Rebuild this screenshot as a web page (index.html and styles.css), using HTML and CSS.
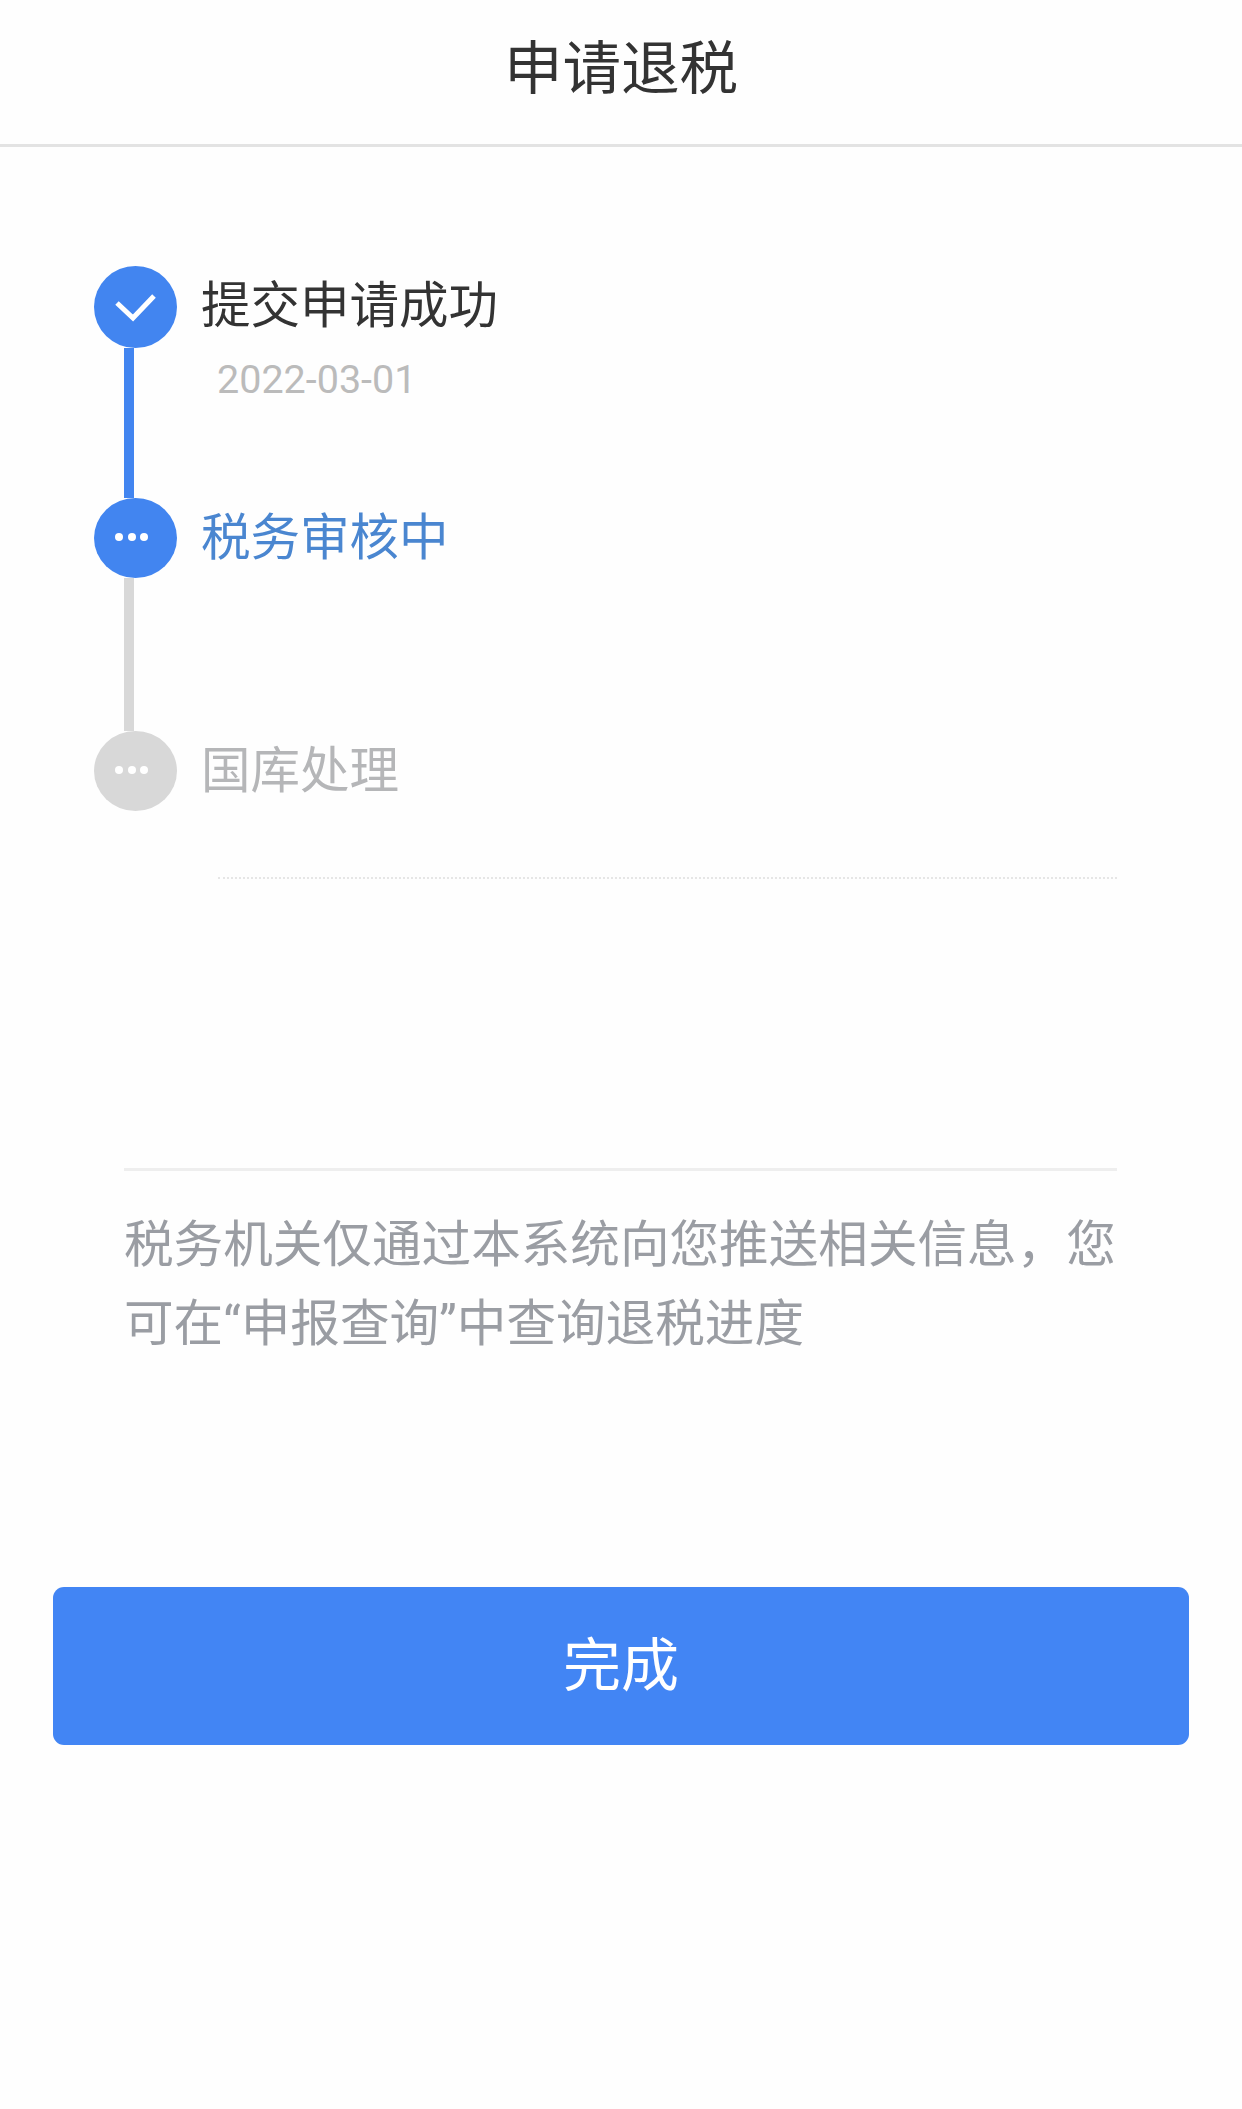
FILE: index.html
```html
<!DOCTYPE html>
<html lang="zh-CN">
<head>
  <meta charset="UTF-8"/>
  <meta name="viewport" content="width=device-width, initial-scale=1.0"/>
  <title>申请退税</title>
  <link rel="stylesheet" href="styles.css">
</head>
<body>
<div class="header">申请退税</div>

<div class="steps">
  <div class="step step_done">
    <div class="marker">
      <svg class="dot" viewBox="0 0 83 82">
        <path d="M23 37 L39 52 L60 30" fill="none" stroke="#fff" stroke-width="5"/>
      </svg>
      <div class="bar"></div>
    </div>
    <div class="info">
      <div class="name">提交申请成功</div>
      <div class="date">2022-03-01</div>
    </div>
  </div>

  <div class="step step_active">
    <div class="marker">
      <svg class="dot" viewBox="0 0 83 80">
        <circle cx="25" cy="39" r="4" fill="#fff"/>
        <circle cx="38" cy="39" r="4" fill="#fff"/>
        <circle cx="50" cy="39" r="4" fill="#fff"/>
      </svg>
      <div class="bar"></div>
    </div>
    <div class="info">
      <div class="name">税务审核中</div>
    </div>
  </div>

  <div class="step step_wait">
    <div class="marker">
      <svg class="dot" viewBox="0 0 83 80">
        <circle cx="25" cy="39" r="4" fill="#fff"/>
        <circle cx="38" cy="39" r="4" fill="#fff"/>
        <circle cx="50" cy="39" r="4" fill="#fff"/>
      </svg>
    </div>
    <div class="info">
      <div class="name">国库处理</div>
    </div>
  </div>
</div>

<div class="dotted"></div>

<div class="notice">税务机关仅通过本系统向您推送相关信息，您可在“申报查询”中查询退税进度</div>

<button class="done_btn">完成</button>
</body>
</html>
```

FILE: styles.css
```css
* {
    box-sizing: border-box;
}

html, body {
    height: 2109px;
    overflow: hidden;
}

body {
    margin: 0;
    background-color: #fefefe;
    font-family: Roboto, "Noto Sans CJK SC", sans-serif;
}

.header {
    height: 147px;
    padding-top: 35px;
    border-bottom: 3px solid #e3e3e3;
    font-size: 58.5px;
    line-height: 68px;
    text-align: center;
    color: #333;
}

.steps {
    margin: 119px 0 0 94px;
}

.step {
    display: flex;
    height: 233px;
}

.step_done {
    height: 232px;
}

.step_wait {
    height: 79px;
}

.marker {
    display: flex;
    flex-direction: column;
    width: 83px;
}

.dot {
    display: block;
    flex: none;
    width: 83px;
    height: 80px;
    border-radius: 50%;
    background-color: #4285f0;
}

.step_done .dot {
    height: 82px;
}

.bar {
    flex: 1;
    width: 10px;
    margin-left: 30px;
    background-color: #4285f0;
}

.step_active .bar {
    background-color: #d8d8d8;
}

.step_wait .dot {
    background-color: #d8d8d8;
}

.info {
    margin-left: 24px;
}

.name {
    font-size: 49.5px;
    line-height: 81px;
    color: #333;
}

.step_active .name {
    color: #4a86d0;
}

.step_wait .name {
    color: #b5b6b8;
}

.date {
    margin-top: -3px;
    padding-left: 16px;
    font-size: 39.5px;
    line-height: 72px;
    color: #bbb;
}

.dotted {
    margin: 67px 125px 0 218px;
    border-top: 2px dotted #e6e6e6;
}

.notice {
    width: 993px;
    margin: 289px 0 0 124px;
    padding-top: 35px;
    border-top: 3px solid #eee;
    font-size: 49.6px;
    line-height: 79px;
    color: #9a9da3;
    word-break: break-all;
}

.done_btn {
    display: block;
    width: 1136px;
    height: 158px;
    margin: 223px 0 0 53px;
    padding: 0 0 10px;
    border: 0;
    border-radius: 11px;
    background-color: #4285f4;
    font-family: inherit;
    font-size: 58px;
    color: #fff;
}
```
